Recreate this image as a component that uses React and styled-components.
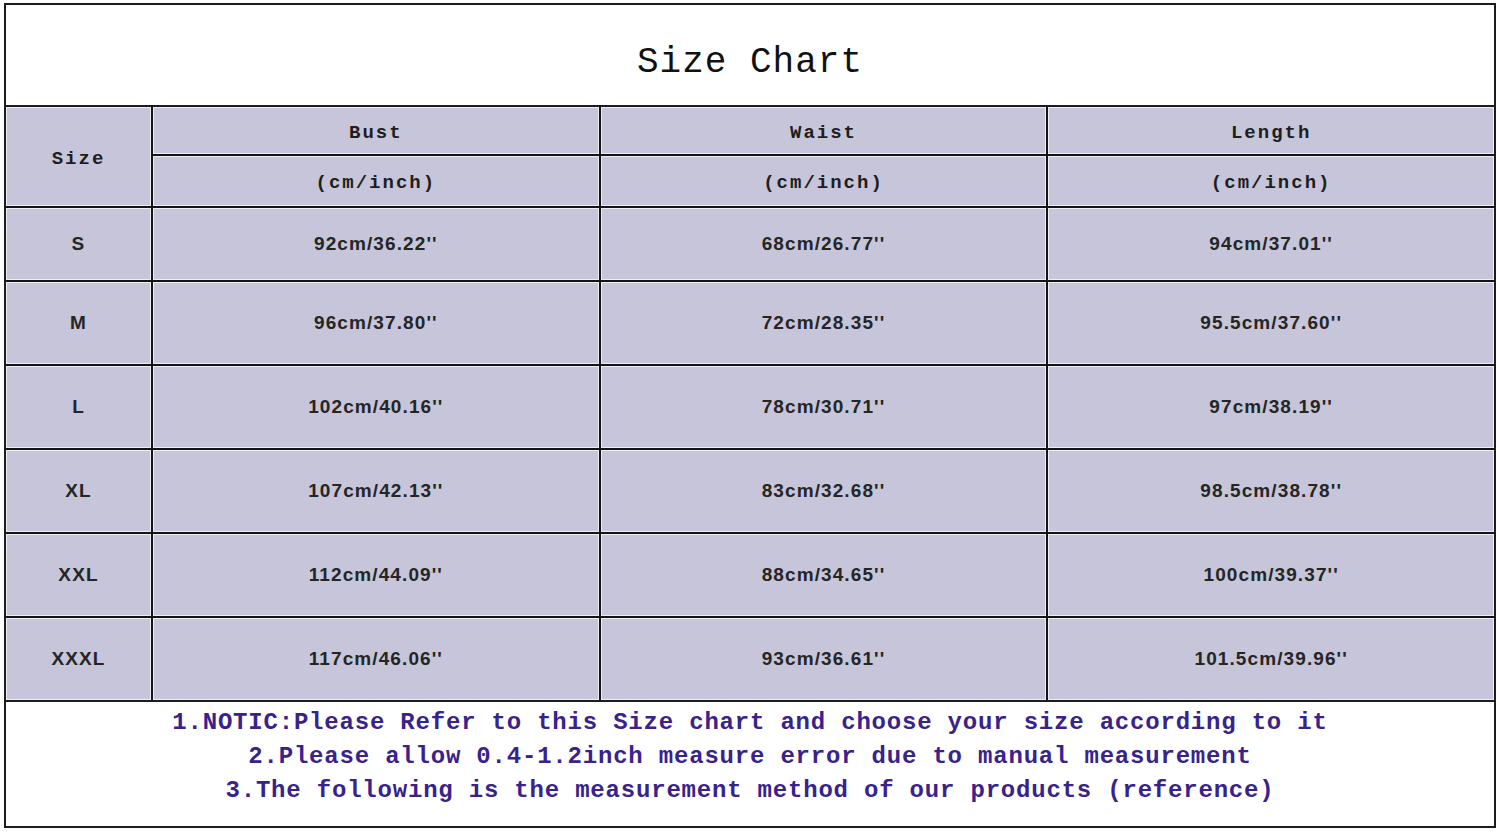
import React from 'react';
import styled, { createGlobalStyle } from 'styled-components';

const GlobalStyle = createGlobalStyle`
  html, body {
    margin: 0;
    padding: 0;
    background: #ffffff;
  }
`;

const Page = styled.div`
  padding: 3px 4px 4px 4px;
  width: 1500px;
  box-sizing: border-box;
`;

const Frame = styled.div`
  border: 2px solid #1c1c1c;
  display: flex;
  flex-direction: column;
`;

const Title = styled.div`
  height: 102px;
  display: flex;
  align-items: center;
  justify-content: center;
  padding-top: 14px;
  box-sizing: border-box;
  font-family: "Liberation Mono", "DejaVu Sans Mono", monospace;
  font-size: 36px;
  letter-spacing: 1px;
  color: #111;
  border-bottom: 2px solid #1c1c1c;
`;

const Grid = styled.div`
  display: grid;
  grid-template-columns: 145px 1fr 1fr 1fr;
  grid-template-rows: 47px 50px 72px repeat(5, 82px);
  gap: 2px;
  background: #141414;
  border-bottom: 2px solid #1c1c1c;
`;

const Cell = styled.div`
  background: #c6c5d9;
  box-shadow: inset 0 0 0 1px #eeeef5;
  display: flex;
  align-items: center;
  justify-content: center;
  color: #1e1e1e;
`;

const HeadCell = styled(Cell)`
  font-family: "Liberation Mono", "DejaVu Sans Mono", monospace;
  font-weight: bold;
  font-size: 19px;
  letter-spacing: 2px;
  grid-row: ${p => (p.$tall ? 'span 2' : 'auto')};
  padding-top: ${p => (p.$tall ? '4px' : '4px')};
`;

const DataCell = styled(Cell)`
  font-family: "Liberation Sans", Arial, sans-serif;
  font-weight: bold;
  font-size: 19px;
  letter-spacing: 1.1px;
  padding-top: 0;
  color: #252525;
`;

const Notes = styled.div`
  height: 124px;
  padding-top: 4px;
  box-sizing: border-box;
  display: flex;
  flex-direction: column;
  align-items: center;
  font-family: "Liberation Mono", "DejaVu Sans Mono", monospace;
  font-weight: bold;
  font-size: 24px;
  letter-spacing: 0.8px;
  line-height: 34px;
  color: #38228c;
`;

const NoteLine = styled.div`
  white-space: pre;
`;

const rows = [
  ['S', "92cm/36.22''", "68cm/26.77''", "94cm/37.01''"],
  ['M', "96cm/37.80''", "72cm/28.35''", "95.5cm/37.60''"],
  ['L', "102cm/40.16''", "78cm/30.71''", "97cm/38.19''"],
  ['XL', "107cm/42.13''", "83cm/32.68''", "98.5cm/38.78''"],
  ['XXL', "112cm/44.09''", "88cm/34.65''", "100cm/39.37''"],
  ['XXXL', "117cm/46.06''", "93cm/36.61''", "101.5cm/39.96''"],
];

const notes = [
  '1.NOTIC:Please Refer to this Size chart and choose your size according to it',
  '2.Please allow 0.4-1.2inch measure error due to manual measurement',
  '3.The following is the measurement method of our products (reference)',
];

export default function App() {
  return (
    <Page>
      <GlobalStyle />
      <Frame>
        <Title>Size Chart</Title>
        <Grid>
          <HeadCell $tall>Size</HeadCell>
          <HeadCell>Bust</HeadCell>
          <HeadCell>Waist</HeadCell>
          <HeadCell>Length</HeadCell>
          <HeadCell>(cm/inch)</HeadCell>
          <HeadCell>(cm/inch)</HeadCell>
          <HeadCell>(cm/inch)</HeadCell>
          {rows.map(r =>
            r.map((v, i) => <DataCell key={r[0] + i}>{v}</DataCell>)
          )}
        </Grid>
        <Notes>
          {notes.map(n => (
            <NoteLine key={n}>{n}</NoteLine>
          ))}
        </Notes>
      </Frame>
    </Page>
  );
}
